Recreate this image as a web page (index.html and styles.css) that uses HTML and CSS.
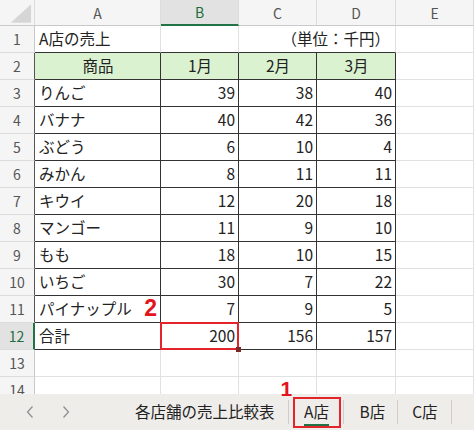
FILE: index.html
```html
<!DOCTYPE html>
<html lang="ja">
<head>
<meta charset="utf-8">
<link rel="stylesheet" href="styles.css">
</head>
<body>
<div class="sheet">
  <div class="grid">
    <div class="hd corner"><svg width="35" height="26" viewBox="0 0 35 26"><polygon points="11,23 32,23 32,4" fill="#d6d6d6"/></svg></div>
    <div class="hd">A</div><div class="hd sel">B</div><div class="hd">C</div><div class="hd">D</div><div class="hd">E</div>

    <div class="rh">1</div><div class="c bt">A店の売上</div><div class="c bt"></div><div class="c bt span2 n">（単位：千円）</div><div class="c"></div>

    <div class="rh dk">2</div><div class="c bx g ctr">商品</div><div class="c bx g ctr">1月</div><div class="c bx g ctr">2月</div><div class="c bx g ctr">3月</div><div class="c"></div>

    <div class="rh dk">3</div><div class="c bx">りんご</div><div class="c bx n">39</div><div class="c bx n">38</div><div class="c bx n">40</div><div class="c"></div>
    <div class="rh dk">4</div><div class="c bx">バナナ</div><div class="c bx n">40</div><div class="c bx n">42</div><div class="c bx n">36</div><div class="c"></div>
    <div class="rh dk">5</div><div class="c bx">ぶどう</div><div class="c bx n">6</div><div class="c bx n">10</div><div class="c bx n">4</div><div class="c"></div>
    <div class="rh dk">6</div><div class="c bx">みかん</div><div class="c bx n">8</div><div class="c bx n">11</div><div class="c bx n">11</div><div class="c"></div>
    <div class="rh dk">7</div><div class="c bx">キウイ</div><div class="c bx n">12</div><div class="c bx n">20</div><div class="c bx n">18</div><div class="c"></div>
    <div class="rh dk">8</div><div class="c bx">マンゴー</div><div class="c bx n">11</div><div class="c bx n">9</div><div class="c bx n">10</div><div class="c"></div>
    <div class="rh dk">9</div><div class="c bx">もも</div><div class="c bx n">18</div><div class="c bx n">10</div><div class="c bx n">15</div><div class="c"></div>
    <div class="rh dk">10</div><div class="c bx">いちご</div><div class="c bx n">30</div><div class="c bx n">7</div><div class="c bx n">22</div><div class="c"></div>
    <div class="rh dk">11</div><div class="c bx anchor2">パイナップル<span class="mark mark2">2</span></div><div class="c bx n">7</div><div class="c bx n">9</div><div class="c bx n">5</div><div class="c"></div>
    <div class="rh rsel">12</div><div class="c bx">合計</div><div class="c bx n active">200<span class="handle"></span></div><div class="c bx n">156</div><div class="c bx n">157</div><div class="c"></div>

    <div class="rh">13</div><div class="c"></div><div class="c"></div><div class="c"></div><div class="c"></div><div class="c"></div>
    <div class="rh">14</div><div class="c"></div><div class="c"></div><div class="c"></div><div class="c"></div><div class="c"></div>
  </div>
  <div class="tabs">
    <div class="nav">
      <svg width="8" height="12" viewBox="0 0 8 12"><polyline points="6.5,0.5 1.5,6 6.5,11.5" fill="none" stroke="#8c8c8c" stroke-width="1.2"/></svg>
      <svg width="8" height="12" viewBox="0 0 8 12"><polyline points="1.5,0.5 6.5,6 1.5,11.5" fill="none" stroke="#8c8c8c" stroke-width="1.2"/></svg>
    </div>
    <div class="tab first">各店舗の売上比較表</div>
    <div class="sep"></div>
    <div class="tab current"><span class="cur-text">A店</span><span class="mark mark1">1</span></div>
    <div class="sep s2"></div>
    <div class="tab t-b">B店</div>
    <div class="sep"></div>
    <div class="tab t-c">C店</div>
    <div class="sep"></div>
  </div>
</div>
</body>
</html>
```

FILE: styles.css
```css
html, body {
  margin: 0;
  padding: 0;
  background: #ffffff;
}

.sheet {
  width: 474px;
  height: 430px;
  display: flex;
  flex-direction: column;
  overflow: hidden;
  font-family: "Noto Sans CJK JP", "Noto Sans", sans-serif;
  color: #222222;
}

.grid {
  display: grid;
  grid-template-columns: 35px 126px 78px 78px 79px 78px;
  grid-template-rows: 26px repeat(14, 27px);
  height: 394px;
  overflow: hidden;
  flex: none;
}

.grid > div {
  box-sizing: border-box;
  display: flex;
  align-items: center;
  white-space: nowrap;
  line-height: 1;
}

.hd {
  background: #f5f5f5;
  color: #555555;
  font-size: 14px;
  justify-content: center;
  border-right: 1px solid #dcdcdc;
  border-bottom: 1px solid #c9c9c9;
}

.hd.corner {
  padding: 0;
  align-items: stretch;
}

.hd.sel {
  background: #e2e2e2;
  color: #1d6d3f;
  border-bottom: 2px solid #217346;
}

.rh {
  background: #f5f5f5;
  color: #555555;
  font-size: 14px;
  justify-content: center;
  border-right: 1px solid #c9c9c9;
  border-bottom: 1px solid #dcdcdc;
}

.rh.dk {
  border-right-color: #555555;
}

.rh.rsel {
  background: #e2e2e2;
  color: #1d6d3f;
  border-right: 2px solid #217346;
}

.c {
  font-size: 15.5px;
  padding: 0 3px 0 4px;
  border-right: 1px solid #e1e1e1;
  border-bottom: 1px solid #e1e1e1;
}

.n {
  justify-content: flex-end;
}

.ctr {
  justify-content: center;
}

.span2 {
  grid-column: span 2;
  padding-right: 5px;
}

.bt {
  border-bottom-color: #333333;
}

.bx {
  border-right-color: #333333;
  border-bottom-color: #333333;
}

.g {
  background: #daf2d0;
}

.anchor2 {
  position: relative;
}

.active {
  position: relative;
}

.active::after {
  content: "";
  position: absolute;
  left: -1px;
  top: -1px;
  right: -1px;
  bottom: -1px;
  border: 2px solid #e3242b;
}

.handle {
  position: absolute;
  right: -3px;
  bottom: -3px;
  width: 5px;
  height: 5px;
  background: #7d2727;
  z-index: 2;
}

.mark {
  position: absolute;
  font-family: "Liberation Sans", Arial, sans-serif;
  font-weight: bold;
  color: #e3141c;
  line-height: 1;
  z-index: 3;
}

.mark2 {
  font-size: 23px;
  right: 3px;
  top: 1px;
}

.tabs {
  flex: 1;
  background: #efedea;
  display: flex;
  align-items: center;
  font-size: 15.5px;
  color: #222222;
}

.nav {
  width: 100px;
  display: flex;
  align-items: center;
  gap: 28px;
  padding-left: 26px;
  box-sizing: border-box;
  height: 100%;
}

.tab {
  display: flex;
  align-items: center;
  height: 100%;
  line-height: 1;
  white-space: nowrap;
}

.tab.first {
  margin-left: 35px;
  padding-right: 13px;
}

.sep {
  width: 1px;
  height: 24px;
  background: #cfccc9;
}

.tab.current {
  position: relative;
  box-sizing: border-box;
  margin-left: 4px;
  width: 48px;
  height: 31px;
  border: 2px solid #e3242b;
  justify-content: center;
}

.cur-text {
  position: relative;
  padding-bottom: 1px;
}

.cur-text::after {
  content: "";
  position: absolute;
  left: 0;
  right: 0;
  bottom: -6px;
  height: 2px;
  background: #217346;
}

.mark1 {
  font-size: 21px;
  left: -14px;
  top: -21px;
}

.sep.s2 {
  margin-left: 2px;
}

.tab.t-b {
  padding: 0 12px 0 16px;
}

.tab.t-c {
  padding: 0 13px 0 14px;
}
```
